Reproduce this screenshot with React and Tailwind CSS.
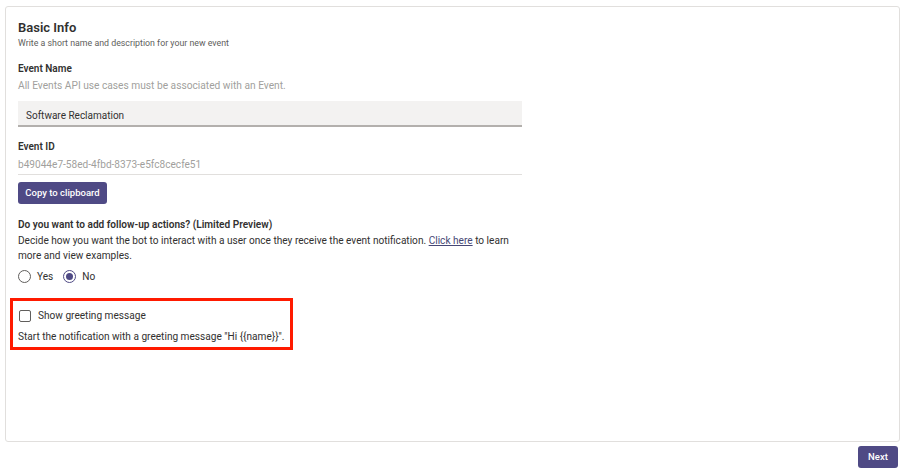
import { useState } from 'react';

const App = () => {
    const [followUp, setFollowUp] = useState('no');
    const [greeting, setGreeting] = useState(false);

    return (
        <div className="w-[910px] h-[476px] bg-white pl-[5px] pt-[6px] pr-[10px] font-['Roboto','Liberation_Sans',sans-serif] text-[#323130]">
            <div className="w-[895px] h-[436px] border border-[#e1dfdd] rounded-[3px] pl-[12px] pt-[13px]">
                <h2 className="text-[13px] leading-[16px] font-semibold text-[#323130]">Basic Info</h2>
                <p className="text-[8.8px] leading-[14px] text-[#605e5c]">Write a short name and description for your new event</p>

                <label className="block mt-[11px] text-[10px] leading-[16px] font-semibold">Event Name</label>
                <p className="mt-[1px] text-[10.2px] leading-[16px] text-[#a19f9d]">All Events API use cases must be associated with an Event.</p>
                <div className="mt-[7px] w-[504px] h-[26px] pt-[4px] bg-[#f3f2f1] border-b-2 border-[#b3b0ad] flex items-center px-[8px] text-[10px] text-[#323130]">
                    Software Reclamation
                </div>

                <label className="block mt-[12px] text-[10px] leading-[16px] font-semibold">Event ID</label>
                <div className="w-[504px] h-[20px] pt-[1px] leading-[18px] border-b border-[#e1dfdd] text-[10.1px] text-[#a19f9d]">
                    b49044e7-58ed-4fbd-8373-e5fc8cecfe51
                </div>
                <button className="mt-[7px] h-[22px] w-[89px] rounded-[3px] bg-[#4f4a85] text-white text-[9.5px] font-medium">
                    Copy to clipboard
                </button>

                <h3 className="mt-[13px] text-[10.1px] leading-[16px] font-semibold">Do you want to add follow-up actions? (Limited Preview)</h3>
                <p className="w-[504px] text-[10.1px] leading-[15px] text-[#323130]">
                    Decide how you want the bot to interact with a user once they receive the event notification.{' '}
                    <a href="#" className="text-[#464775] underline">Click here</a> to learn more and view examples.
                </p>
                <div className="mt-[6px] h-[16px] flex items-center text-[10.1px]">
                    <button className="flex items-center" onClick={() => setFollowUp('yes')}>
                        <span className="w-[13px] h-[13px] rounded-full border border-[#605e5c] flex items-center justify-center">
                            {followUp === 'yes' && <span className="w-[7px] h-[7px] rounded-full bg-[#4f4a85]" />}
                        </span>
                        <span className="ml-[6px]">Yes</span>
                    </button>
                    <button className="flex items-center ml-[10px]" onClick={() => setFollowUp('no')}>
                        <span className={`w-[13px] h-[13px] rounded-full border flex items-center justify-center ${followUp === 'no' ? 'border-[#4f4a85]' : 'border-[#605e5c]'}`}>
                            {followUp === 'no' && <span className="w-[7px] h-[7px] rounded-full bg-[#4f4a85]" />}
                        </span>
                        <span className="ml-[6px]">No</span>
                    </button>
                </div>

                {/* highlighted greeting section */}
                <div className="mt-[13px] ml-[-8px] w-[283px] border-[3px] border-[#ff1a00] pl-[5px] pt-[7px] pb-[2px]">
                    <button className="flex items-center h-[16px] text-[10.1px]" onClick={() => setGreeting(!greeting)}>
                        <span className="ml-[1px] w-[12px] h-[12px] rounded-[2px] border border-[#605e5c] flex items-center justify-center text-[9px] text-[#4f4a85]">
                            {greeting ? '✓' : ''}
                        </span>
                        <span className="ml-[7px]">Show greeting message</span>
                    </button>
                    <p className="mt-[5px] text-[10.1px] leading-[16px]">Start the notification with a greeting message "Hi {'{{name}}'}".</p>
                </div>
            </div>
            <div className="flex justify-end mt-[4px] pr-[2px]">
                <button className="w-[40px] h-[22px] rounded-[3px] bg-[#4f4a85] text-white text-[9.5px] font-medium">Next</button>
            </div>
        </div>
    );
};

export default App;
